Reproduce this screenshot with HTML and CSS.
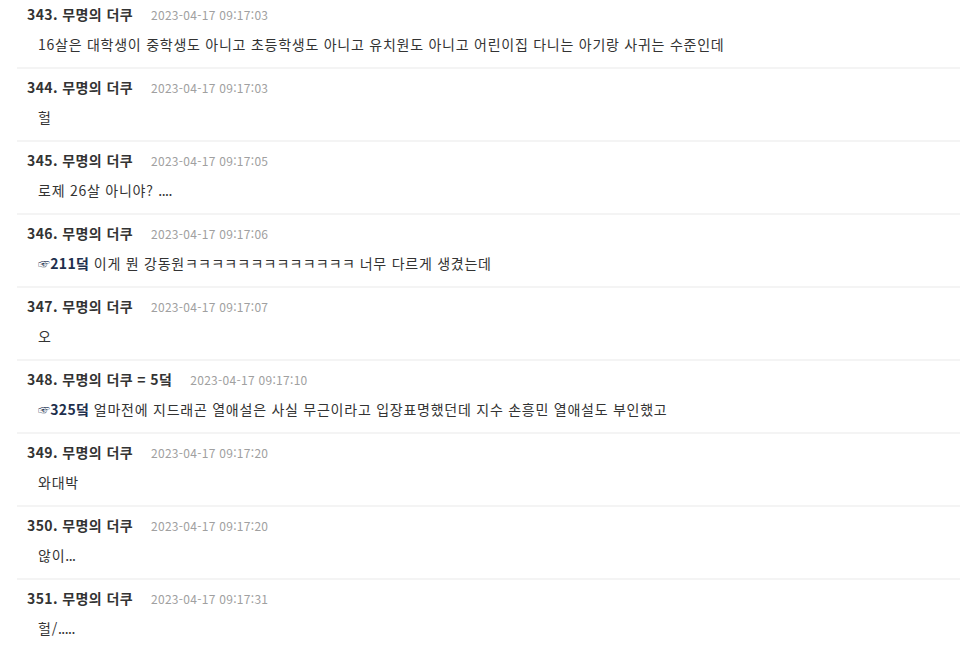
FILE: index.html
```html
<!DOCTYPE html>
<html lang="ko">
<head>
<meta charset="utf-8">
<link rel="stylesheet" href="styles.css">
</head>
<body>
<div class="list">
  <div class="item">
    <div class="head"><span class="name">343. 무명의 더쿠</span><span class="date">2023-04-17 09:17:03</span></div>
    <div class="body">16살은 대학생이 중학생도 아니고 초등학생도 아니고 유치원도 아니고 어린이집 다니는 아기랑 사귀는 수준인데</div>
  </div>
  <div class="item">
    <div class="head"><span class="name">344. 무명의 더쿠</span><span class="date">2023-04-17 09:17:03</span></div>
    <div class="body">헐</div>
  </div>
  <div class="item">
    <div class="head"><span class="name">345. 무명의 더쿠</span><span class="date">2023-04-17 09:17:05</span></div>
    <div class="body">로제 26살 아니야? <span class="dots">....</span></div>
  </div>
  <div class="item">
    <div class="head"><span class="name">346. 무명의 더쿠</span><span class="date">2023-04-17 09:17:06</span></div>
    <div class="body"><span class="ref"><span class="hand">☞</span>211덬</span> 이게 뭔 강동원<span class="kk">ㅋㅋㅋㅋㅋㅋㅋㅋㅋㅋㅋㅋㅋ</span> 너무 다르게 생겼는데</div>
  </div>
  <div class="item">
    <div class="head"><span class="name">347. 무명의 더쿠</span><span class="date">2023-04-17 09:17:07</span></div>
    <div class="body">오</div>
  </div>
  <div class="item">
    <div class="head"><span class="name">348. 무명의 더쿠 = 5덬</span><span class="date">2023-04-17 09:17:10</span></div>
    <div class="body"><span class="ref"><span class="hand">☞</span>325덬</span> 얼마전에 지드래곤 열애설은 사실 무근이라고 입장표명했던데 지수 손흥민 열애설도 부인했고</div>
  </div>
  <div class="item">
    <div class="head"><span class="name">349. 무명의 더쿠</span><span class="date">2023-04-17 09:17:20</span></div>
    <div class="body">와대박</div>
  </div>
  <div class="item">
    <div class="head"><span class="name">350. 무명의 더쿠</span><span class="date">2023-04-17 09:17:20</span></div>
    <div class="body">않이<span class="dots">...</span></div>
  </div>
  <div class="item">
    <div class="head"><span class="name">351. 무명의 더쿠</span><span class="date">2023-04-17 09:17:31</span></div>
    <div class="body">헐/<span class="dots">.....</span></div>
  </div>
</div>
</body>
</html>
```

FILE: styles.css
```css
html, body {
  margin: 0;
  padding: 0;
  background: #ffffff;
}
body {
  font-family: "Noto Sans CJK KR", "Noto Sans", sans-serif;
  color: #333333;
  overflow: hidden;
}
.list {
  margin-top: -6px;
  margin-left: 17px;
}
.item {
  border-top: 2px solid #f4f4f4;
  padding: 8px 0 13px 10px;
}
.item:first-child {
  border-top: none;
  padding-top: 10px;
}
.head {
  height: 20px;
  line-height: 20px;
  display: flex;
  align-items: baseline;
  white-space: nowrap;
}
.name {
  font-size: 14px;
  font-weight: 700;
  letter-spacing: 0.4px;
  color: #333333;
}
.date {
  margin-left: 18px;
  font-size: 12px;
  letter-spacing: 0.3px;
  color: #a0a0a0;
}
.body {
  margin-top: 10px;
  height: 20px;
  line-height: 20px;
  padding-left: 11px;
  font-size: 14px;
  letter-spacing: 0.75px;
  color: #333333;
  white-space: nowrap;
}
.dots {
  letter-spacing: -0.5px;
}
.kk {
  letter-spacing: 0.2px;
}
.ref {
  font-weight: 700;
  letter-spacing: 0.3px;
  color: #1e2f4d;
}
.hand {
  font-weight: 400;
  font-size: 12px;
  color: #2a3b5a;
}
```
